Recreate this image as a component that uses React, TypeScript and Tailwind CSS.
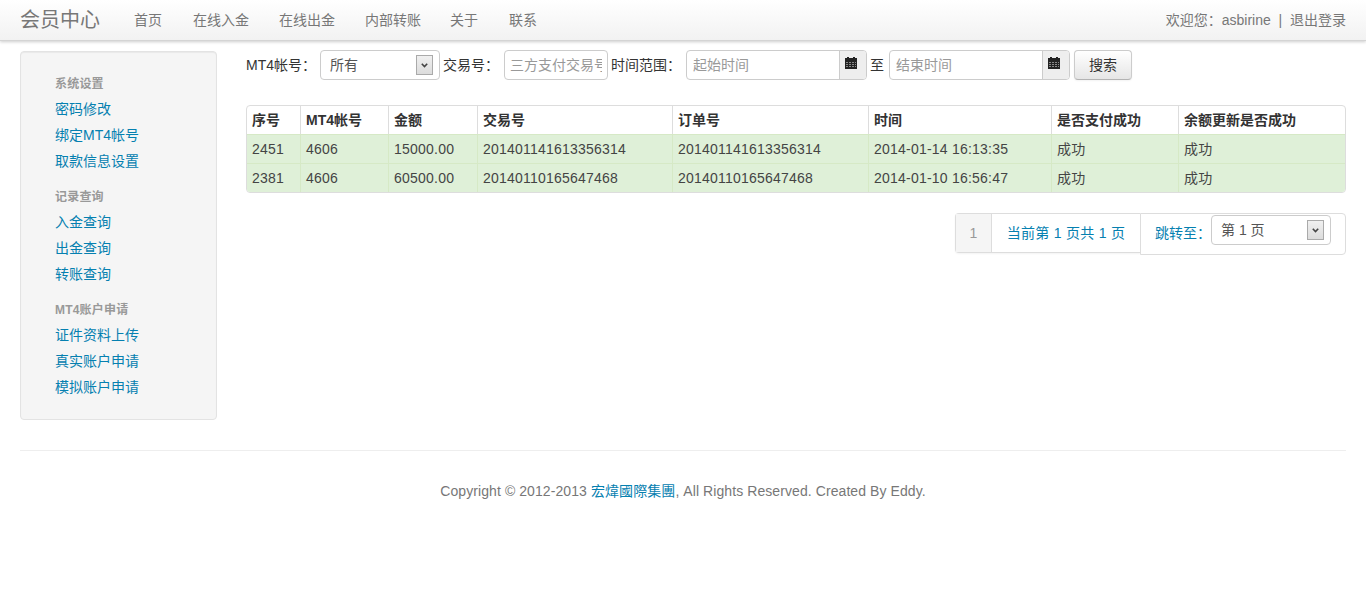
const font = { sans: "font-['Liberation_Sans','Noto_Sans_CJK_SC',sans-serif]" };

const navLinks = [
  { text: "首页", w: "w-[59px]" },
  { text: "在线入金", w: "w-[86px]" },
  { text: "在线出金", w: "w-[86px]" },
  { text: "内部转账", w: "w-[85px]" },
  { text: "关于", w: "w-[59px]" },
  { text: "联系", w: "w-[58px]" },
];

const sideGroups = [
  { title: "系统设置", links: ["密码修改", "绑定MT4帐号", "取款信息设置"] },
  { title: "记录查询", links: ["入金查询", "出金查询", "转账查询"] },
  { title: "MT4账户申请", links: ["证件资料上传", "真实账户申请", "模拟账户申请"] },
];

const columns = [
  { title: "序号", w: "w-[53px]" },
  { title: "MT4帐号", w: "w-[88px]" },
  { title: "金额", w: "w-[89px]" },
  { title: "交易号", w: "w-[195px]" },
  { title: "订单号", w: "w-[196px]" },
  { title: "时间", w: "w-[183px]" },
  { title: "是否支付成功", w: "w-[127px]" },
  { title: "余额更新是否成功", w: "flex-1" },
];

const rows = [
  ["2451", "4606", "15000.00", "201401141613356314", "201401141613356314", "2014-01-14 16:13:35", "成功", "成功"],
  ["2381", "4606", "60500.00", "20140110165647468", "20140110165647468", "2014-01-10 16:56:47", "成功", "成功"],
];

function SelectArrow() {
  return (
    <span className="flex h-[20px] w-[17px] items-center justify-center border border-[#aaa] bg-gradient-to-b from-[#f0f0f0] to-[#dcdcdc]">
      <svg width="7" height="5" viewBox="0 0 7 5">
        <path d="M0.8 0.8 L3.5 3.6 L6.2 0.8" fill="none" stroke="#444" strokeWidth="1.6" />
      </svg>
    </span>
  );
}

function CalendarIcon() {
  return (
    <svg width="12" height="12" viewBox="0 0 12 12" shapeRendering="crispEdges">
      <path d="M0 1h12v11H0z" fill="#222" />
      <path d="M2 0h2v1H2zM8 0h2v1H8z" fill="#222" />
      <path d="M1 5h2v1H1zM4 5h2v1H4zM7 5h2v1H7zM10 5h1v1h-1zM1 7h2v1H1zM4 7h2v1H4zM7 7h2v1H7zM10 7h1v1h-1zM1 9h2v1H1zM4 9h2v1H4zM7 9h2v1H7zM10 9h1v1h-1z" fill="#888" />
    </svg>
  );
}

function DateInput({ placeholder }: { placeholder: string }) {
  return (
    <div className="flex h-[30px] w-[181px] rounded-[4px] border border-[#ccc] bg-white">
      <span className="flex-1 truncate pl-[6px] text-[14px] leading-[28px] text-[#999]">{placeholder}</span>
      <span className="w-[27px] rounded-r-[3px] border-l border-[#ccc] bg-[#eee] pl-[5px] pt-[6px]">
        <CalendarIcon />
      </span>
    </div>
  );
}

export default function App() {
  return (
    <div className={`${font.sans} min-h-[614px] bg-white text-[14px] text-[#333]`}>
      <div className="flex h-[41px] items-center border-b border-[#d4d4d4] bg-gradient-to-b from-white to-[#f2f2f2] pl-[20px] pr-[20px] shadow-[0_1px_3px_rgba(0,0,0,0.2)]">
        <span className="w-[114px] text-[20px] text-[#777]">会员中心</span>
        {navLinks.map((l) => (
          <span key={l.text} className={`${l.w} text-[14px] text-[#777]`}>{l.text}</span>
        ))}
        <span className="ml-auto text-[14px] text-[#777]">欢迎您：asbirine&nbsp; |&nbsp; 退出登录</span>
      </div>

      <div className="flex pl-[20px] pr-[20px] pt-[10px]">
        <div className="h-[369px] w-[197px] shrink-0 rounded-[4px] border border-[#e3e3e3] bg-[#f5f5f5] pl-[34px] pt-[19px] shadow-[inset_0_1px_1px_rgba(0,0,0,0.05)]">
          {sideGroups.map((g) => (
            <div key={g.title} className="mb-[10px]">
              <div className="h-[25px] text-[12px] font-bold leading-[26px] tracking-[0.2px] text-[#999]">{g.title}</div>
              {g.links.map((t) => (
                <div key={t} className="h-[26px] text-[14px] leading-[26px] text-[#0580b0]">{t}</div>
              ))}
            </div>
          ))}
        </div>

        <div className="ml-[29px] flex-1">
          <div className="flex h-[30px] items-center -mt-[1px] text-[14px]">
            <span className="w-[74px]">MT4帐号：</span>
            <div className="flex h-[30px] w-[120px] items-center justify-between rounded-[4px] border border-[#ccc] bg-white pl-[9px] pr-[6px] text-[#555]">
              <span>所有</span>
              <SelectArrow />
            </div>
            <span className="ml-[3px] w-[61px]">交易号：</span>
            <div className="h-[30px] w-[104px] rounded-[4px] border border-[#ccc] bg-white px-[5px] leading-[28px] text-[#999]">
              <div className="overflow-hidden whitespace-nowrap">三方支付交易号</div>
            </div>
            <span className="ml-[3px] w-[75px]">时间范围：</span>
            <DateInput placeholder="起始时间" />
            <span className="ml-[3px] w-[19px]">至</span>
            <DateInput placeholder="结束时间" />
            <div className="ml-[4px] flex h-[30px] w-[58px] items-center justify-center rounded-[4px] border border-[#ccc] border-b-[#b3b3b3] bg-gradient-to-b from-white to-[#e6e6e6] shadow-[0_1px_2px_rgba(0,0,0,0.05)]">搜索</div>
          </div>

          <div className="mt-[25px] overflow-hidden rounded-[4px] border border-[#ddd]">
            <div className="flex h-[28px]">
              {columns.map((c, i) => (
                <div key={c.title} className={`${c.w} shrink-0 pl-[5px] text-[14px] font-bold leading-[28px] ${i > 0 ? "border-l border-[#ddd]" : ""}`}>{c.title}</div>
              ))}
            </div>
            {rows.map((row) => (
              <div key={row[0]} className="flex h-[29px] border-t border-[#d6e9c6] bg-[#dff0d8]">
                {row.map((v, i) => (
                  <div key={i} className={`${columns[i].w} shrink-0 pl-[5px] text-[14px] leading-[28px] tracking-[0.22px] text-[#444] ${i > 0 ? "border-l border-[#d6e9c6]" : ""}`}>{v}</div>
                ))}
              </div>
            ))}
          </div>

          <div className="mt-[20px] flex justify-end">
            <div className="flex h-[40px] items-stretch rounded-l-[4px] border border-r-0 border-[#ddd] shadow-[0_1px_2px_rgba(0,0,0,0.05)]">
              <span className="flex w-[36px] items-center justify-center border-r border-[#ddd] bg-[#f5f5f5] text-[#999]">1</span>
              <span className="flex w-[148px] items-center justify-center tracking-[0.3px] text-[#0580b0]">当前第 1 页共 1 页</span>
            </div>
            <div className="flex h-[42px] w-[206px] items-start rounded-r-[4px] border border-[#ddd] pl-[14px] pt-[1px] text-[#0580b0]">
              <span className="w-[56px] whitespace-nowrap pt-[8px]">跳转至：</span>
              <div className="flex h-[30px] w-[120px] items-center justify-between rounded-[4px] border border-[#ccc] bg-white pl-[9px] pr-[6px] text-[#555]">
                <span>第 1 页</span>
                <SelectArrow />
              </div>
            </div>
          </div>
        </div>
      </div>

      <div className="mx-[20px] mt-[30px] border-t border-[#eee] pt-[30px] text-center text-[14px] leading-[20px] tracking-[0.08px] text-[#777]">
        Copyright © 2012-2013 <span className="text-[#0580b0]">宏煒國際集團</span>, All Rights Reserved. Created By Eddy.
      </div>
    </div>
  );
}
